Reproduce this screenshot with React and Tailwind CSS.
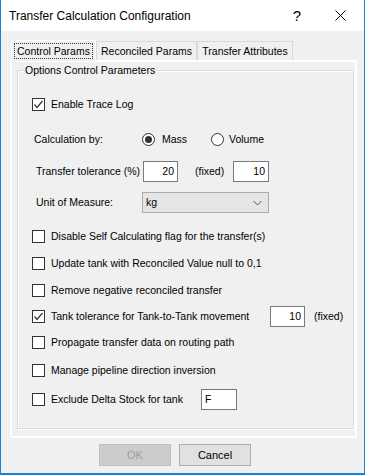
import { useState } from 'react'

const Check = ({ checked }) => (
    <span className="w-[13px] h-[13px] border border-[#333333] bg-white flex items-center justify-center shrink-0">
        {checked && (
            <svg width="11" height="11" viewBox="0 0 11 11">
                <polyline points="1.5,5.5 4,8.5 9.5,2" fill="none" stroke="#333333" strokeWidth="1.2" />
            </svg>
        )}
    </span>
)

const Radio = ({ checked }) => (
    <span className="w-[13px] h-[13px] rounded-full border border-[#333333] bg-white flex items-center justify-center shrink-0">
        {checked && <span className="w-[7px] h-[7px] rounded-full bg-[#333333]" />}
    </span>
)

const Field = ({ value, className = '', left = false }) => (
    <span className={`h-[21px] bg-white border border-[#7a7a7a] flex items-center px-[3px] shrink-0 ${left ? 'justify-start' : 'justify-end'} ${className}`}>
        {value}
    </span>
)

function CheckRow({ label, checked, className = '', labelClass = '', children }) {
    return (
        <div className={`h-[20px] flex items-center pl-[14px] whitespace-nowrap ${className}`}>
            <Check checked={checked} />
            <span className={`ml-[6px] ${labelClass}`}>{label}</span>
            {children}
        </div>
    )
}

export default function App() {
    const [tab] = useState(0)
    const tabs = [
        { label: 'Control Params', w: 'w-[85px]' },
        { label: 'Reconciled Params', w: 'w-[101px]' },
        { label: 'Transfer Attributes', w: 'w-[96px]' },
    ]

    return (
        <div className="w-[365px] h-[475px] bg-[#f0f0f0] border-x border-b-2 border-[#1883d7] flex flex-col font-['Liberation_Sans',Arial,sans-serif] text-[10.5px] text-black leading-none whitespace-nowrap">
            {/* Title bar */}
            <div className="h-[31px] bg-white flex items-center shrink-0">
                <span className="ml-[8px] text-[12px]">Transfer Calculation Configuration</span>
                <span className="ml-auto text-[15px] w-[14px] text-center mr-[31px]">?</span>
                <svg width="11" height="11" viewBox="0 0 11 11" className="mr-[18px]">
                    <path d="M0.5 0.5 L10.5 10.5 M10.5 0.5 L0.5 10.5" stroke="#000" strokeWidth="1" />
                </svg>
            </div>

            {/* Tabs */}
            <div className="flex items-end h-[21px] mt-[8px] ml-[10px] relative z-10">
                {tabs.map((t, i) =>
                    i === tab ? (
                        <div key={t.label} className={`${t.w} h-[21px] px-[2px] flex items-center bg-[#f0f0f0] border-x border-t border-white -mb-px`}>
                            <span className="border border-dotted border-[#333333] w-full h-[16px] flex items-center justify-center">{t.label}</span>
                        </div>
                    ) : (
                        <div key={t.label} className={`${t.w} h-[19px] flex items-center justify-center bg-[#f0f0f0] border-x border-t border-[#d9d9d9]`}>
                            {t.label}
                        </div>
                    )
                )}
            </div>

            {/* Tab panel */}
            <div className="ml-[9px] mr-[7px] h-[378px] border-2 border-white flex flex-col">
                <div className="mt-[8px] ml-[5px] mr-[1px] h-[359px] border border-[#dcdcdc] shadow-[inset_1px_1px_0_#ffffff,1px_1px_0_#ffffff] relative flex flex-col">
                    <span className="absolute -top-[6px] left-[6px] px-[1px] bg-[#f0f0f0]">Options Control Parameters</span>

                    <CheckRow label="Enable Trace Log" checked className="mt-[23px]" />

                    <div className="h-[20px] flex items-center mt-[15px]">
                        <span className="ml-[16px] w-[108px]">Calculation by:</span>
                        <Radio checked />
                        <span className="ml-[7px] w-[49px]">Mass</span>
                        <Radio />
                        <span className="ml-[5px]">Volume</span>
                    </div>

                    <div className="h-[21px] flex items-center mt-[12px]">
                        <span className="ml-[18px] w-[107px]">Transfer tolerance (%)</span>
                        <Field value="20" className="w-[35px]" />
                        <span className="ml-[17px] w-[38px]">(fixed)</span>
                        <Field value="10" className="w-[36px]" />
                    </div>

                    <div className="h-[21px] flex items-center mt-[10px]">
                        <span className="ml-[18px] w-[106px]">Unit of Measure:</span>
                        <span className="w-[127px] h-[21px] bg-[#e5e5e5] border border-[#acacac] flex items-center pl-[3px] pr-[6px]">
                            <span>kg</span>
                            <svg width="9" height="6" viewBox="0 0 9 6" className="ml-auto">
                                <polyline points="0.5,1 4.5,5 8.5,1" fill="none" stroke="#555555" strokeWidth="1" />
                            </svg>
                        </span>
                    </div>

                    <CheckRow label="Disable Self Calculating flag for the transfer(s)" className="mt-[13px]" />
                    <CheckRow label="Update tank with Reconciled Value null to 0,1" className="mt-[7px]" />
                    <CheckRow label="Remove negative reconciled transfer" className="mt-[7px]" />
                    <CheckRow label="Tank tolerance for Tank-to-Tank movement" checked labelClass="w-[219px]" className="mt-[6px]">
                        <Field value="10" className="w-[35px]" />
                        <span className="ml-[9px]">(fixed)</span>
                    </CheckRow>
                    <CheckRow label="Propagate transfer data on routing path" className="mt-[6px]" />
                    <CheckRow label="Manage pipeline direction inversion" className="mt-[8px]" />
                    <CheckRow label="Exclude Delta Stock for tank" labelClass="w-[150px]" className="mt-[9px]">
                        <Field value="F" left className="w-[36px]" />
                    </CheckRow>
                </div>
            </div>

            {/* Buttons */}
            <div className="flex justify-center gap-[8px] mt-[6px] ml-[-15px]">
                <button className="w-[72px] h-[22px] bg-[#cccccc] border border-[#bfbfbf] text-[#9d9d9d] text-[11px]">OK</button>
                <button className="w-[72px] h-[22px] bg-[#e1e1e1] border border-[#adadad] text-black text-[11px]">Cancel</button>
            </div>
        </div>
    )
}
